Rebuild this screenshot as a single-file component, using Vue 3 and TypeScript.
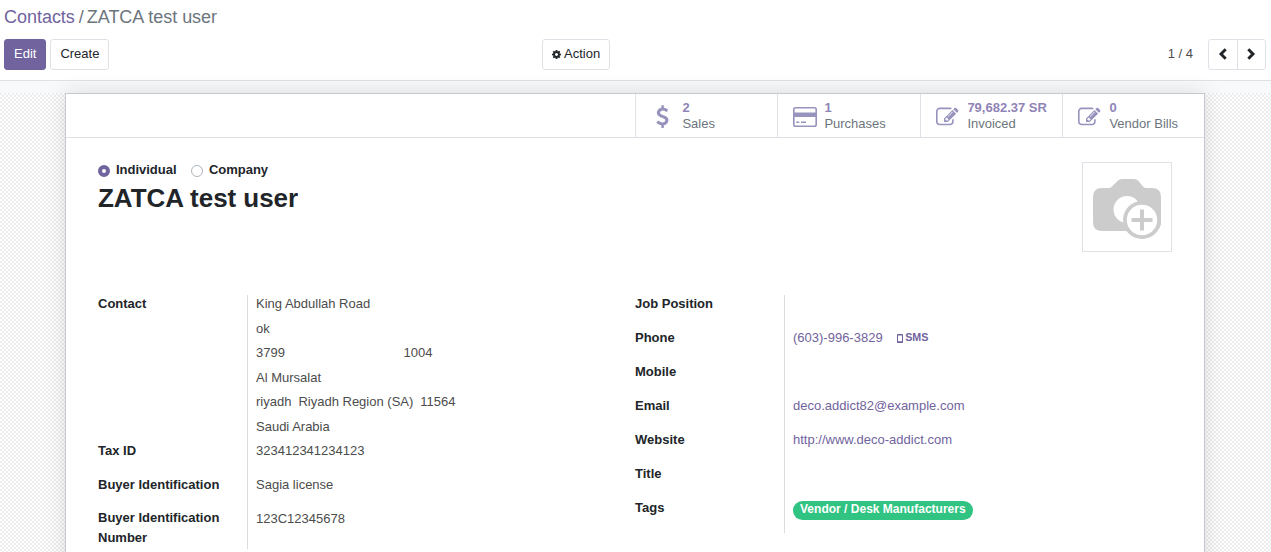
<script setup lang="ts">
interface Stat {
  icon: 'usd' | 'card' | 'edit'
  value: string
  label: string
}

interface Field {
  label: string
  value?: string
  kind?: 'phone' | 'link' | 'tag'
}

const stats: Stat[] = [
  { icon: 'usd', value: '2', label: 'Sales' },
  { icon: 'card', value: '1', label: 'Purchases' },
  { icon: 'edit', value: '79,682.37 SR', label: 'Invoiced' },
  { icon: 'edit', value: '0', label: 'Vendor Bills' },
]

const identity: Field[] = [
  { label: 'Tax ID', value: '323412341234123' },
  { label: 'Buyer Identification', value: 'Sagia license' },
  { label: 'Buyer Identification Number', value: '123C12345678' },
]

const details: Field[] = [
  { label: 'Job Position' },
  { label: 'Phone', value: '(603)-996-3829', kind: 'phone' },
  { label: 'Mobile' },
  { label: 'Email', value: 'deco.addict82@example.com', kind: 'link' },
  { label: 'Website', value: 'http://www.deco-addict.com', kind: 'link' },
  { label: 'Title' },
  { label: 'Tags', value: 'Vendor / Desk Manufacturers', kind: 'tag' },
]
</script>

<template>
  <div class="app">
    <header class="panel">
      <div class="crumbs"><a>Contacts</a><span class="slash">/</span><span>ZATCA test user</span></div>
      <div class="toolbar">
        <div class="side">
          <button class="btn primary">Edit</button>
          <button class="btn">Create</button>
        </div>
        <button class="btn action">
          <svg class="cog" viewBox="0 128 1536 1536"><path fill="currentColor" d="M1024 896q0-106-75-181t-181-75-181 75-75 181 75 181 181 75 181-75 75-181zm512-109v222q0 12-8 23t-20 13l-185 28q-19 54-39 91 35 50 107 138 10 12 10 25t-9 23q-27 37-99 108t-94 71q-12 0-26-9l-138-108q-44 23-91 38-16 136-29 186-7 28-36 28h-222q-14 0-24.500-8.500t-11.500-21.500l-28-184q-49-16-90-37l-141 107q-10 9-25 9-14 0-25-11-126-114-165-168-7-10-7-23 0-12 8-23 15-21 51-66.500t54-70.500q-27-50-41-99l-183-27q-13-2-21-12.500t-8-23.500v-222q0-12 8-23t19-13l186-28q14-46 39-92-40-57-107-138-10-12-10-24 0-10 9-23 26-36 98.500-107.500t94.500-71.500q13 0 26 10l138 107q44-23 91-38 16-136 29-186 7-28 36-28h222q14 0 24.500 8.500t11.500 21.500l28 184q49 16 90 37l142-107q9-9 24-9 13 0 25 10 129 119 165 170 7 8 7 22 0 12-8 23-15 21-51 66.500t-54 70.500q26 50 41 98l183 28q13 2 21 12.500t8 23.500z" /></svg>
          <span>Action</span>
        </button>
        <div class="side right">
          <span class="count">1 / 4</span>
          <div class="pager">
            <button><svg viewBox="0 0 10 12"><path d="M7.700 1.200 3 6l4.700 4.800" /></svg></button>
            <button><svg viewBox="0 0 10 12"><path d="M2.300 1.200 7 6l-4.700 4.800" /></svg></button>
          </div>
        </div>
      </div>
    </header>

    <main class="canvas">
      <section class="sheet">
        <div class="stats">
          <div v-for="s in stats" :key="s.label" class="stat">
            <div class="stat-icon">
              <svg v-if="s.icon === 'usd'" class="usd" viewBox="0 0 1024 1792"><path fill="currentColor" d="M978 1185q0 153-99.500 263.500t-258.500 136.500v175q0 14-9 23t-23 9h-135q-13 0-22.500-9.500t-9.500-22.500v-175q-66-9-127.500-31t-101.500-44.500-74-48-46.500-37.500-17.500-18q-17-21-2-41l103-135q7-10 23-12 15-2 24 9l2 2q113 99 243 125 37 8 74 8 81 0 142.500-43t61.500-122q0-28-15-53t-33.500-42-58.500-37.500-66-32-80-32.500q-39-16-61.500-25t-61.500-26.500-62.500-31-56.500-35.500-53.500-42.500-43.500-49-35.500-58-21-66.500-8.500-78q0-138 98-242t255-134v-180q0-13 9.500-22.500t22.500-9.500h135q14 0 23 9t9 23v176q57 6 110.500 23t87 33.500 63.500 37.500 39 29 15 14q17 18 5 38l-81 146q-8 15-23 16-14 3-27-7-3-3-14.500-12t-39-26.500-58.500-32-74.500-26-85.500-11.500q-95 0-155 43t-60 111q0 26 8.500 48t29.500 41.500 39.500 33 56 31 60.500 27 70 27.500q53 20 81 31.500t76 35 75.500 42.500 62 50 53 63.500 31.500 76.500 13 94z" /></svg>
              <svg v-else-if="s.icon === 'card'" class="card" viewBox="0 0 24 20"><rect x=".8" y=".8" width="22.400" height="18.400" rx="1.800" fill="none" stroke="currentColor" stroke-width="1.600" /><path fill="currentColor" d="M1 5.500h22v4.500H1zM3.300 14.500h3v1.500h-3zM8 14.500h5v1.500H8z" /></svg>
              <svg v-else class="edit" viewBox="0 0 1792 1792"><path fill="currentColor" d="M888 1184l116-116-152-152-116 116v56h96v96h56zm440-720q-16-16-33 1l-350 350q-17 17-1 33t33-1l350-350q17-17 1-33zm80 594v190q0 119-84.500 203.500t-203.500 84.500h-832q-119 0-203.500-84.500t-84.500-203.500v-832q0-119 84.500-203.500t203.500-84.500h832q63 0 117 25 15 7 18 23 3 17-9 29l-49 49q-14 14-32 8-23-6-45-6h-832q-66 0-113 47t-47 113v832q0 66 47 113t113 47h832q66 0 113-47t47-113v-126q0-13 9-22l64-64q15-15 35-7t20 29zm-96-738l288 288-672 672h-288v-288zm444 132l-92 92-288-288 92-92q28-28 68-28t68 28l152 152q28 28 28 68t-28 68z" /></svg>
            </div>
            <div class="stat-text"><b>{{ s.value }}</b><span>{{ s.label }}</span></div>
          </div>
        </div>

        <div class="heading">
          <div>
            <div class="radios">
              <i class="radio on"></i><b>Individual</b>
              <i class="radio"></i><b>Company</b>
            </div>
            <h1>ZATCA test user</h1>
          </div>
          <div class="avatar">
            <svg viewBox="0 0 90 90">
              <path fill="#ccc" d="M20 26h6.500q2 0 3.500-1.500l5-5q2-2.500 4.500-2.500h13q2.500 0 4.500 2.500l4 5Q62.500 26 64.500 26H70q9 0 9 9v25q0 9-9 9H20q-9 0-9-9V35q0-9 9-9z" />
              <circle cx="45" cy="47.500" r="13.500" fill="#fff" />
              <circle cx="60" cy="58" r="19" fill="#ccc" />
              <circle cx="60" cy="58" r="15.200" fill="#fff" />
              <path d="M60 47.500v21M49.500 58h21" stroke="#ccc" stroke-width="4" />
            </svg>
          </div>
        </div>

        <div class="groups">
          <div class="group left">
            <div class="row address">
              <label>Contact</label>
              <div class="value">
                <div>King Abdullah Road</div>
                <div>ok</div>
                <div class="split"><span>3799</span><span>1004</span></div>
                <div>Al Mursalat</div>
                <div class="city"><span>riyadh</span><span>Riyadh Region (SA)</span><span>11564</span></div>
                <div>Saudi Arabia</div>
              </div>
            </div>
            <div v-for="f in identity" :key="f.label" class="row">
              <label>{{ f.label }}</label>
              <div class="value">{{ f.value }}</div>
            </div>
          </div>
          <div class="group">
            <div v-for="f in details" :key="f.label" class="row">
              <label>{{ f.label }}</label>
              <div class="value" :class="{ inline: f.kind === 'phone' }">
                <span v-if="f.kind === 'tag'" class="tag">{{ f.value }}</span>
                <a v-else-if="f.kind">{{ f.value }}</a>
                <span v-if="f.kind === 'phone'" class="sms"><svg viewBox="0 0 6 9"><path fill="currentColor" fill-rule="evenodd" d="M.7 0h4.600q.7 0 .7.700v7.600q0 .7-.7.700H.7Q0 9 0 8.300V.7Q0 0 .7 0zM1 1.500v5.700h4V1.500z" /></svg>SMS</span>
              </div>
            </div>
          </div>
        </div>
      </section>
    </main>
  </div>
</template>

<style>
html, body { margin: 0; overflow: hidden; background: #fff; }
</style>

<style scoped>
* { box-sizing: border-box; }
.app {
  width: 1271px; height: 552px; overflow: hidden;
  font: 13px/20px "Liberation Sans", Arial, sans-serif; color: #4c4c4c;
  display: flex; flex-direction: column;
}
svg { display: block; }
a { color: #71639e; }
.panel { height: 81px; flex: none; border-bottom: 1px solid #dee2e6; background: #fff; padding: 4px 5px 0 4px; }
.crumbs { font-size: 18px; line-height: 26px; color: #6c757d; letter-spacing: -.03px; }
.slash { margin: 0 3px 0 4px; }
.toolbar { display: grid; grid-template-columns: 538px 68px 1fr; align-items: center; margin-top: 9px; height: 31px; }
.side { display: flex; align-items: center; gap: 4px; }
.right { justify-content: flex-end; gap: 15px; }
.btn {
  font: inherit; height: 31px; padding: 0 9px 2px; border: 1px solid #dee2e6; border-radius: 3px;
  background: #fff; color: #212529; display: flex; align-items: center;
}
.primary { background: #71639e; border-color: #71639e; color: #fff; }
.action { gap: 3px; white-space: nowrap; }
.cog { width: 9px; height: 9px; margin-top: 2px; flex: none; }
.count { padding-bottom: 2px; }
.pager { display: flex; }
.pager button {
  width: 30px; height: 31px; padding: 0; border: 1px solid #dee2e6; background: #fff; color: #212529;
  border-radius: 3px 0 0 3px; display: flex; align-items: center; justify-content: center;
}
.pager button + button { width: 29px; margin-left: -1px; border-radius: 0 3px 3px 0; }
.pager svg { width: 10px; height: 12px; margin-bottom: 2px; }
.pager path { fill: none; stroke: currentColor; stroke-width: 2.900; }
.pager button + button svg { margin-right: 2px; }

.canvas {
  flex: 1; padding: 12px 66px 0 65px;
  background:
    linear-gradient(#f8f9fb, #f8f9fb) 0 0 / 100% 12px no-repeat,
    repeating-conic-gradient(#fff 0 25%, #ededed 0 50%) 0 0 / 4px 4px;
}
.sheet {
  height: 520px; background: #fff; border: 1px solid #c8c8d3;
  box-shadow: 0 0 20px rgba(0, 0, 0, .12);
}
.stats { display: grid; grid-template-columns: 142px 143px 142px 142px; justify-content: end; height: 44px; border-bottom: 1px solid #dee2e6; }
.stat { border-left: 1px solid #dee2e6; display: flex; }
.stat-icon { width: 46.400px; flex: none; padding: 12px 0 0 15px; color: #9693bd; }
.usd { width: 13px; height: 23px; margin: -1px 0 0 4.500px; }
.card { width: 24px; height: 20px; margin-top: 1px; }
.edit { width: 22.500px; height: 22.500px; }
.stat-text { padding-top: 6px; line-height: 16px; color: #6c757d; white-space: nowrap; }
.stat-text b { display: block; color: #8f84b7; }
.stat-text span { display: block; }

.heading { display: flex; justify-content: space-between; padding: 24px 32px 0; height: 157px; color: #212529; }
.radios { display: flex; align-items: center; height: 16px; }
.radio { width: 12px; height: 12px; border: 1px solid #adb5bd; border-radius: 50%; margin: 2px 6px 0 0; }
.radio.on { border: 4px solid #71639e; }
.radios b { letter-spacing: -.02px; }
.radios b + .radio { margin-left: 15px; margin-right: 5.500px; }
h1 { margin: 4px 0 0; font-size: 26px; line-height: 32px; font-weight: 700; letter-spacing: -.05px; }
.avatar { width: 90px; height: 90px; border: 1px solid #dee2e6; }
.avatar svg { width: 90px; height: 90px; margin: -1px; }

.groups { display: grid; grid-template-columns: 537px 537px; padding-left: 32px; align-items: start; }
.row { display: grid; grid-template-columns: 149px 1fr; height: 34px; }
.row label { font-weight: 700; color: #212529; line-height: 20px; margin-top: -1px; }
.value { border-left: 1px solid #dcdcdc; padding-left: 8px; line-height: 18px; }
.address { height: 147px; }
.address .value > div { height: 24.500px; }
.split { display: flex; }
.split span:first-child { width: 147.500px; }
.city { display: flex; gap: 7px; }
.left .row:last-child { height: 39px; }
.left .row:last-child label { margin-top: -2px; }
.group .value { white-space: nowrap; }
.inline { display: flex; align-items: flex-start; }
.sms { margin-left: 14px; height: 16px; font-size: 10.700px; line-height: 16px; font-weight: 700; color: #71639e; display: flex; align-items: center; gap: 2.500px; }
.sms svg { width: 6px; height: 9px; margin-top: 2px; }
.tag { display: block; width: 180px; height: 19px; margin-top: 2px; padding: 0 7px; border-radius: 10px; font-size: 12px; line-height: 17px; letter-spacing: .01px; font-weight: 700; color: #fff; background: #30c381; }
</style>
